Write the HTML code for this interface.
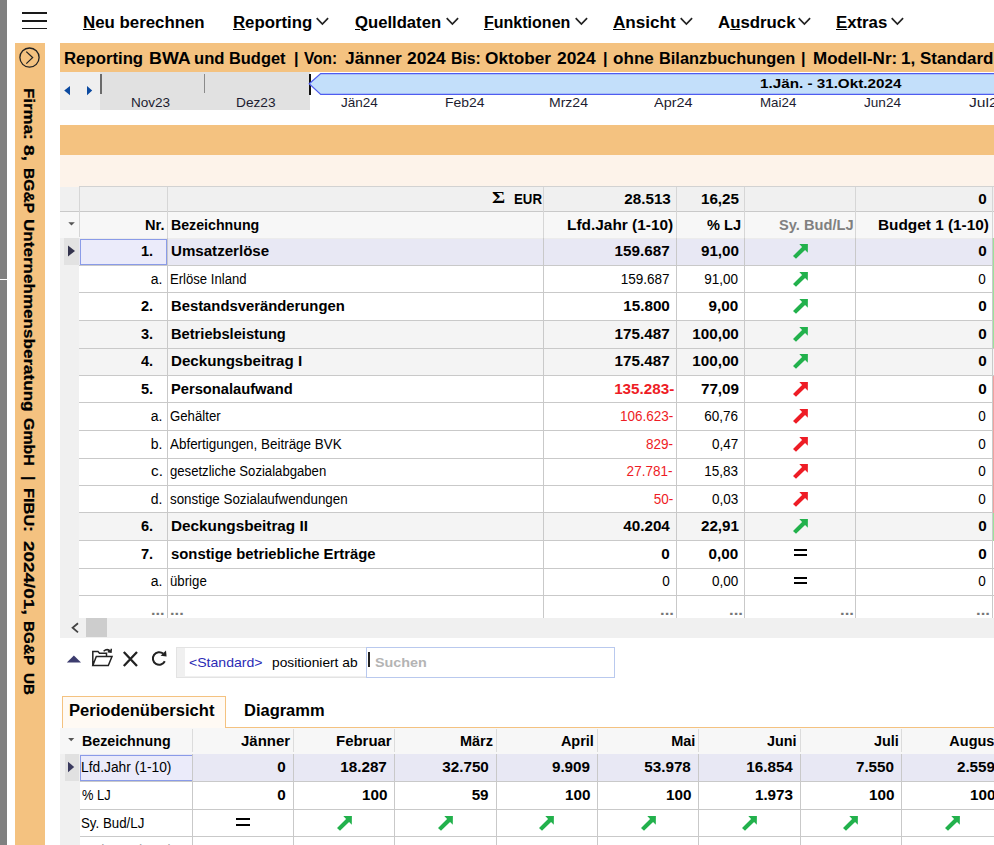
<!DOCTYPE html>
<html><head><meta charset="utf-8"><title>Reporting BWA und Budget</title><style>
html,body{margin:0;padding:0;background:#fff}
body{width:994px;height:845px;position:relative;overflow:hidden;font-family:"Liberation Sans", sans-serif;}
#r{position:absolute;left:0;top:0;width:994px;height:845px;overflow:hidden;background:#fff}
#r div,#r svg,#r span{position:absolute}
#r span{white-space:nowrap;line-height:1;transform-origin:0 0}
#r span.b{font-weight:bold}
#r span.r{transform-origin:100% 0}
u{text-decoration:underline;text-underline-offset:0.8px;text-decoration-thickness:1.1px}
</style></head><body><div id="r">
<div style="left:0px;top:0px;width:7px;height:845px;background:#808080;"></div>
<div style="left:0px;top:279px;width:7px;height:1.2px;background:#fff;"></div>
<div style="left:14.6px;top:43px;width:30.2px;height:802px;background:#f4c280;"></div>
<div style="left:60px;top:43px;width:934px;height:29px;background:#f4c280;"></div>
<div style="left:60px;top:72px;width:40px;height:38px;background:#efefef;"></div>
<div style="left:100px;top:72px;width:209.5px;height:38px;background:#e1e1e1;"></div>
<div style="left:100px;top:74px;width:1.5px;height:19.5px;background:#6a6a6a;"></div>
<div style="left:204.2px;top:74px;width:1px;height:19px;background:#8a8a8a;"></div>
<div style="left:308.5px;top:73.5px;width:2px;height:21px;background:#111;"></div>
<div style="left:60px;top:125px;width:934px;height:30px;background:#f4c280;"></div>
<div style="left:60px;top:155px;width:934px;height:31.5px;background:#fdf3ea;"></div>
<div style="left:60px;top:186.5px;width:934px;height:24.5px;background:#f0f0f0;"></div>
<div style="left:60px;top:211px;width:934px;height:27px;background:#f7f7f7;"></div>
<div style="left:60px;top:238px;width:19px;height:379.5px;background:#f0f0f0;"></div>
<div style="left:79px;top:238.0px;width:915px;height:27.5px;background:#e8e8f4;"></div>
<div style="left:79px;top:320.5px;width:915px;height:27.5px;background:#f4f4f4;"></div>
<div style="left:79px;top:348.0px;width:915px;height:27.5px;background:#f4f4f4;"></div>
<div style="left:79px;top:513.0px;width:915px;height:27.5px;background:#f4f4f4;"></div>
<div style="left:794px;top:549px;width:13px;height:2px;background:#000;"></div>
<div style="left:794px;top:554px;width:13px;height:2px;background:#000;"></div>
<div style="left:794px;top:577px;width:13px;height:2px;background:#000;"></div>
<div style="left:794px;top:582px;width:13px;height:2px;background:#000;"></div>
<div style="left:79px;top:186px;width:915px;height:1px;background:#d2d2d2;"></div>
<div style="left:60px;top:210.5px;width:934px;height:1px;background:#c9c9c9;"></div>
<div style="left:79px;top:237.5px;width:915px;height:1px;background:#ececec;"></div>
<div style="left:79px;top:265px;width:915px;height:1px;background:#c9c9c9;"></div>
<div style="left:79px;top:292px;width:915px;height:1px;background:#c9c9c9;"></div>
<div style="left:79px;top:320px;width:915px;height:1px;background:#c9c9c9;"></div>
<div style="left:79px;top:348px;width:915px;height:1px;background:#c9c9c9;"></div>
<div style="left:79px;top:375px;width:915px;height:1px;background:#c9c9c9;"></div>
<div style="left:79px;top:402px;width:915px;height:1px;background:#c9c9c9;"></div>
<div style="left:79px;top:430px;width:915px;height:1px;background:#c9c9c9;"></div>
<div style="left:79px;top:458px;width:915px;height:1px;background:#c9c9c9;"></div>
<div style="left:79px;top:485px;width:915px;height:1px;background:#c9c9c9;"></div>
<div style="left:79px;top:512px;width:915px;height:1px;background:#c9c9c9;"></div>
<div style="left:79px;top:540px;width:915px;height:1px;background:#c9c9c9;"></div>
<div style="left:79px;top:568px;width:915px;height:1px;background:#c9c9c9;"></div>
<div style="left:79px;top:595px;width:915px;height:1px;background:#c9c9c9;"></div>
<div style="left:78.5px;top:187px;width:1px;height:50px;background:#d6d6d6;"></div>
<div style="left:167px;top:187px;width:1px;height:51px;background:#d6d6d6;"></div>
<div style="left:167px;top:238px;width:1px;height:379.5px;background:#c9c9c9;"></div>
<div style="left:543px;top:187px;width:1px;height:51px;background:#d6d6d6;"></div>
<div style="left:543px;top:238px;width:1px;height:379.5px;background:#c9c9c9;"></div>
<div style="left:676px;top:187px;width:1px;height:51px;background:#d6d6d6;"></div>
<div style="left:676px;top:238px;width:1px;height:379.5px;background:#c9c9c9;"></div>
<div style="left:744px;top:187px;width:1px;height:51px;background:#d6d6d6;"></div>
<div style="left:744px;top:238px;width:1px;height:379.5px;background:#c9c9c9;"></div>
<div style="left:855px;top:187px;width:1px;height:51px;background:#d6d6d6;"></div>
<div style="left:855px;top:238px;width:1px;height:379.5px;background:#c9c9c9;"></div>
<div style="left:992px;top:187px;width:1px;height:51px;background:#d6d6d6;"></div>
<div style="left:992px;top:238px;width:1px;height:379.5px;background:#c9c9c9;"></div>
<div style="left:993px;top:238px;width:1px;height:110px;background:#9be29b;"></div>
<div style="left:993px;top:375.5px;width:1px;height:137.5px;background:#f2a0a0;"></div>
<div style="left:993px;top:513px;width:1px;height:27.5px;background:#9be29b;"></div>
<div style="left:64px;top:238.4px;width:14.5px;height:26.6px;background:#e2e2e2;"></div>
<div style="left:79.6px;top:238.8px;width:87.6px;height:26.6px;background:#ebebfa;border:1.3px solid #8a9be8;box-sizing:border-box"></div>
<div style="left:60px;top:617.5px;width:934px;height:20.5px;background:#f0f0f0;"></div>
<div style="left:86px;top:617.5px;width:21px;height:19.5px;background:#cdcdcd;"></div>
<div style="left:176px;top:646.5px;width:190.5px;height:31px;background:#f0f0f0;border:1px solid #e3e3e3;box-sizing:border-box"></div>
<div style="left:185px;top:648px;width:181px;height:28px;background:#fff;"></div>
<div style="left:366px;top:646.5px;width:249px;height:31px;background:#fff;border:1px solid #b9c9ee;box-sizing:border-box"></div>
<div style="left:368px;top:651.5px;width:1.6px;height:15.5px;background:#222;"></div>
<div style="left:61.5px;top:695.5px;width:164.5px;height:32px;background:#fffaf4;border:1px solid #f4c280;border-bottom:none;box-sizing:border-box"></div>
<div style="left:225.5px;top:726.5px;width:769px;height:1.5px;background:#f4c280;"></div>
<div style="left:60px;top:727.5px;width:934px;height:26.5px;background:#f7f7f7;"></div>
<div style="left:60px;top:754px;width:19.5px;height:91px;background:#f0f0f0;"></div>
<div style="left:79.5px;top:754px;width:915px;height:27.3px;background:#e8e8f4;"></div>
<div style="left:64.5px;top:754.2px;width:14.5px;height:26.8px;background:#e1e1e1;"></div>
<div style="left:80px;top:754.8px;width:112.5px;height:26.2px;background:#ebebfa;border:1.3px solid #8a9be8;box-sizing:border-box"></div>
<div style="left:79.5px;top:781px;width:915px;height:1px;background:#c9c9c9;"></div>
<div style="left:79.5px;top:809px;width:915px;height:1px;background:#c9c9c9;"></div>
<div style="left:79.5px;top:836px;width:915px;height:1px;background:#c9c9c9;"></div>
<div style="left:192px;top:729px;width:1px;height:23px;background:#dcdcdc;"></div>
<div style="left:192px;top:754px;width:1px;height:92px;background:#c9c9c9;"></div>
<div style="left:293px;top:729px;width:1px;height:23px;background:#dcdcdc;"></div>
<div style="left:293px;top:754px;width:1px;height:92px;background:#c9c9c9;"></div>
<div style="left:394px;top:729px;width:1px;height:23px;background:#dcdcdc;"></div>
<div style="left:394px;top:754px;width:1px;height:92px;background:#c9c9c9;"></div>
<div style="left:496px;top:729px;width:1px;height:23px;background:#dcdcdc;"></div>
<div style="left:496px;top:754px;width:1px;height:92px;background:#c9c9c9;"></div>
<div style="left:597px;top:729px;width:1px;height:23px;background:#dcdcdc;"></div>
<div style="left:597px;top:754px;width:1px;height:92px;background:#c9c9c9;"></div>
<div style="left:698px;top:729px;width:1px;height:23px;background:#dcdcdc;"></div>
<div style="left:698px;top:754px;width:1px;height:92px;background:#c9c9c9;"></div>
<div style="left:800px;top:729px;width:1px;height:23px;background:#dcdcdc;"></div>
<div style="left:800px;top:754px;width:1px;height:92px;background:#c9c9c9;"></div>
<div style="left:901px;top:729px;width:1px;height:23px;background:#dcdcdc;"></div>
<div style="left:901px;top:754px;width:1px;height:92px;background:#c9c9c9;"></div>
<div style="left:236.3px;top:818.2px;width:13.3px;height:2.1px;background:#000;"></div>
<div style="left:236.3px;top:823.5px;width:13.3px;height:2.1px;background:#000;"></div>
<div style="left:22px;top:12.4px;width:25px;height:1.5px;background:#1a1a1a;"></div>
<div style="left:22px;top:20.2px;width:25px;height:1.5px;background:#1a1a1a;"></div>
<div style="left:22px;top:27.7px;width:25px;height:1.5px;background:#1a1a1a;"></div>
<svg style="left:300px;top:70px" width="694" height="28" viewBox="300 70 694 28"><path d="M309.2 83.8 L320.7 73.6 L1000 73.6 L1000 94.4 L320.7 94.4 Z" fill="#c3dffa" stroke="#4f5cf0" stroke-width="1.2"/></svg>
<svg style="left:62px;top:84px" width="34" height="14" viewBox="62 84 34 14"><path d="M64.2 90.6 L70 86 L70 95.3 Z M92.2 90.6 L87 86 L87 95.3 Z" fill="#0c4aa0"/></svg>
<svg style="left:17px;top:45px" width="26" height="26" viewBox="17 45 26 26"><circle cx="29.5" cy="57.6" r="9.6" fill="none" stroke="#222" stroke-width="1.3"/><path d="M26.3 51.6 L32.6 57.6 L26.3 63.6" fill="none" stroke="#222" stroke-width="1.3"/></svg>
<svg style="left:66px;top:220px" width="12" height="8" viewBox="66 220 12 8"><path d="M68.3 222.3 L74.8 222.3 L71.5 225.4 Z" fill="#555"/></svg>
<svg style="left:66px;top:243px" width="12" height="16" viewBox="66 243 12 16"><path d="M68 245.5 L75 251 L68 256.4 Z" fill="#33334d"/></svg>
<svg style="left:66px;top:736px" width="12" height="8" viewBox="66 736 12 8"><path d="M68.1 737.9 L74.3 737.9 L71.2 741.2 Z" fill="#555"/></svg>
<svg style="left:66px;top:759px" width="12" height="16" viewBox="66 759 12 16"><path d="M68 761.7 L74.2 767 L68 772.3 Z" fill="#3a3a5e"/></svg>
<svg style="left:68px;top:620px" width="14" height="14" viewBox="68 620 14 14"><path d="M78 623.2 L72.6 627.8 L78 632.4" fill="none" stroke="#444" stroke-width="1.8"/></svg>
<svg style="left:64px;top:645px" width="110" height="26" viewBox="64 645 110 26"><path d="M66.8 662.6 L73.9 655.4 L81 662.6 Z" fill="#3c3c6e"/><path d="M92.8 665.5 L92.8 651.5 L98 651.5 L99.5 653.3 L106.5 653.3 L106.5 656.6 M92.8 665.5 L96.3 656.6 L112 656.6 L108.3 665.5 Z M103.6 651.2 Q107.3 647.9 110.6 651.4 M111.3 648.8 L111 652.2 L107.8 651.8" fill="none" stroke="#222" stroke-width="1.5"/><path d="M123.8 652 L137 666 M137 652 L123.8 666" fill="none" stroke="#222" stroke-width="2.3"/><path d="M164.8 661.3 A6.3 6.3 0 1 1 163.2 653.6" fill="none" stroke="#222" stroke-width="2"/><path d="M160.6 655.8 L166.6 656.6 L166 650.6 Z" fill="#222"/></svg>
<svg style="left:793.2px;top:244.2px" width="15" height="15" viewBox="0 0 15 15"><polygon points="0,11.9 9.05,2.9 6.3,0.1 14.9,0 14.8,8.7 12.05,5.9 3,14.8" fill="#22b14c"/></svg>
<svg style="left:793.2px;top:271.6px" width="15" height="15" viewBox="0 0 15 15"><polygon points="0,11.9 9.05,2.9 6.3,0.1 14.9,0 14.8,8.7 12.05,5.9 3,14.8" fill="#22b14c"/></svg>
<svg style="left:793.2px;top:299.1px" width="15" height="15" viewBox="0 0 15 15"><polygon points="0,11.9 9.05,2.9 6.3,0.1 14.9,0 14.8,8.7 12.05,5.9 3,14.8" fill="#22b14c"/></svg>
<svg style="left:793.2px;top:326.6px" width="15" height="15" viewBox="0 0 15 15"><polygon points="0,11.9 9.05,2.9 6.3,0.1 14.9,0 14.8,8.7 12.05,5.9 3,14.8" fill="#22b14c"/></svg>
<svg style="left:793.2px;top:354.1px" width="15" height="15" viewBox="0 0 15 15"><polygon points="0,11.9 9.05,2.9 6.3,0.1 14.9,0 14.8,8.7 12.05,5.9 3,14.8" fill="#22b14c"/></svg>
<svg style="left:793.2px;top:381.6px" width="15" height="15" viewBox="0 0 15 15"><polygon points="0,11.9 9.05,2.9 6.3,0.1 14.9,0 14.8,8.7 12.05,5.9 3,14.8" fill="#ee1c25"/></svg>
<svg style="left:793.2px;top:409.1px" width="15" height="15" viewBox="0 0 15 15"><polygon points="0,11.9 9.05,2.9 6.3,0.1 14.9,0 14.8,8.7 12.05,5.9 3,14.8" fill="#ee1c25"/></svg>
<svg style="left:793.2px;top:436.6px" width="15" height="15" viewBox="0 0 15 15"><polygon points="0,11.9 9.05,2.9 6.3,0.1 14.9,0 14.8,8.7 12.05,5.9 3,14.8" fill="#ee1c25"/></svg>
<svg style="left:793.2px;top:464.1px" width="15" height="15" viewBox="0 0 15 15"><polygon points="0,11.9 9.05,2.9 6.3,0.1 14.9,0 14.8,8.7 12.05,5.9 3,14.8" fill="#ee1c25"/></svg>
<svg style="left:793.2px;top:491.6px" width="15" height="15" viewBox="0 0 15 15"><polygon points="0,11.9 9.05,2.9 6.3,0.1 14.9,0 14.8,8.7 12.05,5.9 3,14.8" fill="#ee1c25"/></svg>
<svg style="left:793.2px;top:519.1px" width="15" height="15" viewBox="0 0 15 15"><polygon points="0,11.9 9.05,2.9 6.3,0.1 14.9,0 14.8,8.7 12.05,5.9 3,14.8" fill="#22b14c"/></svg>
<svg style="left:336.8px;top:815.6px" width="15" height="15" viewBox="0 0 15 15"><polygon points="0,11.9 9.05,2.9 6.3,0.1 14.9,0 14.8,8.7 12.05,5.9 3,14.8" fill="#22b14c"/></svg>
<svg style="left:438.0px;top:815.6px" width="15" height="15" viewBox="0 0 15 15"><polygon points="0,11.9 9.05,2.9 6.3,0.1 14.9,0 14.8,8.7 12.05,5.9 3,14.8" fill="#22b14c"/></svg>
<svg style="left:539.4px;top:815.6px" width="15" height="15" viewBox="0 0 15 15"><polygon points="0,11.9 9.05,2.9 6.3,0.1 14.9,0 14.8,8.7 12.05,5.9 3,14.8" fill="#22b14c"/></svg>
<svg style="left:640.5px;top:815.6px" width="15" height="15" viewBox="0 0 15 15"><polygon points="0,11.9 9.05,2.9 6.3,0.1 14.9,0 14.8,8.7 12.05,5.9 3,14.8" fill="#22b14c"/></svg>
<svg style="left:741.9px;top:815.6px" width="15" height="15" viewBox="0 0 15 15"><polygon points="0,11.9 9.05,2.9 6.3,0.1 14.9,0 14.8,8.7 12.05,5.9 3,14.8" fill="#22b14c"/></svg>
<svg style="left:843.4px;top:815.6px" width="15" height="15" viewBox="0 0 15 15"><polygon points="0,11.9 9.05,2.9 6.3,0.1 14.9,0 14.8,8.7 12.05,5.9 3,14.8" fill="#22b14c"/></svg>
<svg style="left:944.8px;top:815.6px" width="15" height="15" viewBox="0 0 15 15"><polygon points="0,11.9 9.05,2.9 6.3,0.1 14.9,0 14.8,8.7 12.05,5.9 3,14.8" fill="#22b14c"/></svg>
<svg style="left:316px;top:17px" width="13" height="9" viewBox="0 0 13 9"><path d="M0.7 1.2 L6.4 7 L12.1 1.2" fill="none" stroke="#222" stroke-width="1.7"/></svg>
<svg style="left:445.6px;top:17px" width="13" height="9" viewBox="0 0 13 9"><path d="M0.7 1.2 L6.4 7 L12.1 1.2" fill="none" stroke="#222" stroke-width="1.7"/></svg>
<svg style="left:574.8px;top:17px" width="13" height="9" viewBox="0 0 13 9"><path d="M0.7 1.2 L6.4 7 L12.1 1.2" fill="none" stroke="#222" stroke-width="1.7"/></svg>
<svg style="left:680px;top:17px" width="13" height="9" viewBox="0 0 13 9"><path d="M0.7 1.2 L6.4 7 L12.1 1.2" fill="none" stroke="#222" stroke-width="1.7"/></svg>
<svg style="left:798.3px;top:17px" width="13" height="9" viewBox="0 0 13 9"><path d="M0.7 1.2 L6.4 7 L12.1 1.2" fill="none" stroke="#222" stroke-width="1.7"/></svg>
<svg style="left:891.3px;top:17px" width="13" height="9" viewBox="0 0 13 9"><path d="M0.7 1.2 L6.4 7 L12.1 1.2" fill="none" stroke="#222" stroke-width="1.7"/></svg>
<span id="s0" class="b" style="left:22.3px;top:87.6px;font-size:15.2px;-webkit-text-stroke:0.25px #000;transform-origin:0 0;transform:rotate(90deg) translate(0,-100%) scaleX(1.1130);">Firma:</span>
<span id="s1" class="b" style="left:22.3px;top:145.4px;font-size:15.2px;-webkit-text-stroke:0.25px #000;transform-origin:0 0;transform:rotate(90deg) translate(0,-100%) scaleX(1.2769);">8,</span>
<span id="s2" class="b" style="left:22.3px;top:167.5px;font-size:15.2px;-webkit-text-stroke:0.25px #000;transform-origin:0 0;transform:rotate(90deg) translate(0,-100%) scaleX(1.0295);">BG&amp;P</span>
<span id="s3" class="b" style="left:22.3px;top:219px;font-size:15.2px;-webkit-text-stroke:0.25px #000;transform-origin:0 0;transform:rotate(90deg) translate(0,-100%) scaleX(1.1240);">Unternehmensberatung</span>
<span id="s4" class="b" style="left:22.3px;top:418.3px;font-size:15.2px;-webkit-text-stroke:0.25px #000;transform-origin:0 0;transform:rotate(90deg) translate(0,-100%) scaleX(1.0500);">GmbH</span>
<span id="s5" class="b" style="left:22.3px;top:475.6px;font-size:15.2px;-webkit-text-stroke:0.25px #000;transform-origin:0 0;transform:rotate(90deg) translate(0,-100%) scaleX(1.0000);">|</span>
<span id="s6" class="b" style="left:22.3px;top:488.3px;font-size:15.2px;-webkit-text-stroke:0.25px #000;transform-origin:0 0;transform:rotate(90deg) translate(0,-100%) scaleX(1.0805);">FIBU:</span>
<span id="s7" class="b" style="left:22.3px;top:541px;font-size:15.2px;-webkit-text-stroke:0.25px #000;transform-origin:0 0;transform:rotate(90deg) translate(0,-100%) scaleX(1.2458);">2024/01,</span>
<span id="s8" class="b" style="left:22.3px;top:621px;font-size:15.2px;-webkit-text-stroke:0.25px #000;transform-origin:0 0;transform:rotate(90deg) translate(0,-100%) scaleX(1.0045);">BG&amp;P</span>
<span id="s9" class="b" style="left:22.3px;top:672.9px;font-size:15.2px;-webkit-text-stroke:0.25px #000;transform-origin:0 0;transform:rotate(90deg) translate(0,-100%) scaleX(1.0045);">UB</span>
<span id="t0" class="b" style="top:244.15px;font-size:14px;left:140.7px;transform:scaleX(1.0417);">1.</span>
<span id="t1" class="b" style="top:244.15px;font-size:14px;left:170.5px;transform:scaleX(1.0780);">Umsatzerlöse</span>
<span id="t2" class="b r" style="top:244.15px;font-size:14px;right:324.00px;transform:scaleX(1.0880);">159.687</span>
<span id="t3" class="b r" style="top:244.15px;font-size:14px;right:255.40px;transform:scaleX(1.0880);">91,00</span>
<span id="t4" class="b r" style="top:244.15px;font-size:14px;right:7.20px;transform:scaleX(1.0880);">0</span>
<span id="t5" style="top:271.65px;font-size:14px;left:150.79999999999998px;">a.</span>
<span id="t6" style="top:271.65px;font-size:14px;left:169.79999999999998px;transform:scaleX(0.9366);">Erlöse Inland</span>
<span id="t7" class="r" style="top:271.65px;font-size:14px;right:324.00px;transform:scaleX(0.9660);">159.687</span>
<span id="t8" class="r" style="top:271.65px;font-size:14px;right:255.90px;transform:scaleX(0.9660);">91,00</span>
<span id="t9" class="r" style="top:271.65px;font-size:14px;right:7.90px;transform:scaleX(0.9660);">0</span>
<span id="t10" class="b" style="top:299.15px;font-size:14px;left:140.7px;transform:scaleX(1.0417);">2.</span>
<span id="t11" class="b" style="top:299.15px;font-size:14px;left:170.5px;transform:scaleX(1.0585);">Bestandsveränderungen</span>
<span id="t12" class="b r" style="top:299.15px;font-size:14px;right:324.00px;transform:scaleX(1.0880);">15.800</span>
<span id="t13" class="b r" style="top:299.15px;font-size:14px;right:255.40px;transform:scaleX(1.0880);">9,00</span>
<span id="t14" class="b r" style="top:299.15px;font-size:14px;right:7.20px;transform:scaleX(1.0880);">0</span>
<span id="t15" class="b" style="top:326.65px;font-size:14px;left:140.7px;transform:scaleX(1.0417);">3.</span>
<span id="t16" class="b" style="top:326.65px;font-size:14px;left:170.5px;transform:scaleX(1.0464);">Betriebsleistung</span>
<span id="t17" class="b r" style="top:326.65px;font-size:14px;right:324.00px;transform:scaleX(1.0880);">175.487</span>
<span id="t18" class="b r" style="top:326.65px;font-size:14px;right:255.40px;transform:scaleX(1.0880);">100,00</span>
<span id="t19" class="b r" style="top:326.65px;font-size:14px;right:7.20px;transform:scaleX(1.0880);">0</span>
<span id="t20" class="b" style="top:354.15px;font-size:14px;left:140.7px;transform:scaleX(1.0417);">4.</span>
<span id="t21" class="b" style="top:354.15px;font-size:14px;left:170.5px;transform:scaleX(1.0802);">Deckungsbeitrag I</span>
<span id="t22" class="b r" style="top:354.15px;font-size:14px;right:324.00px;transform:scaleX(1.0880);">175.487</span>
<span id="t23" class="b r" style="top:354.15px;font-size:14px;right:255.40px;transform:scaleX(1.0880);">100,00</span>
<span id="t24" class="b r" style="top:354.15px;font-size:14px;right:7.20px;transform:scaleX(1.0880);">0</span>
<span id="t25" class="b" style="top:381.65px;font-size:14px;left:140.7px;transform:scaleX(1.0417);">5.</span>
<span id="t26" class="b" style="top:381.65px;font-size:14px;left:170.5px;transform:scaleX(1.0491);">Personalaufwand</span>
<span id="t27" class="b r" style="top:381.65px;font-size:14px;color:#ee1c25;right:320.20px;transform:scaleX(1.0880);">135.283-</span>
<span id="t28" class="b r" style="top:381.65px;font-size:14px;right:255.40px;transform:scaleX(1.0880);">77,09</span>
<span id="t29" class="b r" style="top:381.65px;font-size:14px;right:7.20px;transform:scaleX(1.0880);">0</span>
<span id="t30" style="top:409.15px;font-size:14px;left:150.79999999999998px;">a.</span>
<span id="t31" style="top:409.15px;font-size:14px;left:169.79999999999998px;transform:scaleX(0.9426);">Gehälter</span>
<span id="t32" class="r" style="top:409.15px;font-size:14px;color:#ee1c25;right:321.10px;transform:scaleX(0.9660);">106.623-</span>
<span id="t33" class="r" style="top:409.15px;font-size:14px;right:255.90px;transform:scaleX(0.9660);">60,76</span>
<span id="t34" class="r" style="top:409.15px;font-size:14px;right:7.90px;transform:scaleX(0.9660);">0</span>
<span id="t35" style="top:436.65px;font-size:14px;left:150.79999999999998px;">b.</span>
<span id="t36" style="top:436.65px;font-size:14px;left:169.79999999999998px;transform:scaleX(0.9587);">Abfertigungen, Beiträge BVK</span>
<span id="t37" class="r" style="top:436.65px;font-size:14px;color:#ee1c25;right:321.10px;transform:scaleX(0.9660);">829-</span>
<span id="t38" class="r" style="top:436.65px;font-size:14px;right:255.90px;transform:scaleX(0.9660);">0,47</span>
<span id="t39" class="r" style="top:436.65px;font-size:14px;right:7.90px;transform:scaleX(0.9660);">0</span>
<span id="t40" style="top:464.15px;font-size:14px;left:150.79999999999998px;transform:scaleX(1.0909);">c.</span>
<span id="t41" style="top:464.15px;font-size:14px;left:169.79999999999998px;transform:scaleX(0.9377);">gesetzliche Sozialabgaben</span>
<span id="t42" class="r" style="top:464.15px;font-size:14px;color:#ee1c25;right:321.10px;transform:scaleX(0.9660);">27.781-</span>
<span id="t43" class="r" style="top:464.15px;font-size:14px;right:255.90px;transform:scaleX(0.9660);">15,83</span>
<span id="t44" class="r" style="top:464.15px;font-size:14px;right:7.90px;transform:scaleX(0.9660);">0</span>
<span id="t45" style="top:491.65px;font-size:14px;left:150.79999999999998px;">d.</span>
<span id="t46" style="top:491.65px;font-size:14px;left:169.79999999999998px;transform:scaleX(0.9548);">sonstige Sozialaufwendungen</span>
<span id="t47" class="r" style="top:491.65px;font-size:14px;color:#ee1c25;right:321.10px;transform:scaleX(0.9660);">50-</span>
<span id="t48" class="r" style="top:491.65px;font-size:14px;right:255.90px;transform:scaleX(0.9660);">0,03</span>
<span id="t49" class="r" style="top:491.65px;font-size:14px;right:7.90px;transform:scaleX(0.9660);">0</span>
<span id="t50" class="b" style="top:519.15px;font-size:14px;left:140.7px;transform:scaleX(1.0417);">6.</span>
<span id="t51" class="b" style="top:519.15px;font-size:14px;left:170.5px;transform:scaleX(1.0936);">Deckungsbeitrag II</span>
<span id="t52" class="b r" style="top:519.15px;font-size:14px;right:324.00px;transform:scaleX(1.0880);">40.204</span>
<span id="t53" class="b r" style="top:519.15px;font-size:14px;right:255.40px;transform:scaleX(1.0880);">22,91</span>
<span id="t54" class="b r" style="top:519.15px;font-size:14px;right:7.20px;transform:scaleX(1.0880);">0</span>
<span id="t55" class="b" style="top:546.65px;font-size:14px;left:140.7px;transform:scaleX(1.0417);">7.</span>
<span id="t56" class="b" style="top:546.65px;font-size:14px;left:170.5px;transform:scaleX(1.0601);">sonstige betriebliche Erträge</span>
<span id="t57" class="b r" style="top:546.65px;font-size:14px;right:324.00px;transform:scaleX(1.0880);">0</span>
<span id="t58" class="b r" style="top:546.65px;font-size:14px;right:255.40px;transform:scaleX(1.0880);">0,00</span>
<span id="t59" class="b r" style="top:546.65px;font-size:14px;right:7.20px;transform:scaleX(1.0880);">0</span>
<span id="t60" style="top:574.15px;font-size:14px;left:150.79999999999998px;">a.</span>
<span id="t61" style="top:574.15px;font-size:14px;left:169.79999999999998px;transform:scaleX(0.9436);">übrige</span>
<span id="t62" class="r" style="top:574.15px;font-size:14px;right:324.00px;transform:scaleX(0.9660);">0</span>
<span id="t63" class="r" style="top:574.15px;font-size:14px;right:255.90px;transform:scaleX(0.9660);">0,00</span>
<span id="t64" class="r" style="top:574.15px;font-size:14px;right:7.90px;transform:scaleX(0.9660);">0</span>
<span id="t65" class="b" style="top:603.15px;font-size:14px;color:#777;left:150.79999999999998px;transform:scaleX(1.1667);">...</span>
<span id="t66" class="b" style="top:603.15px;font-size:14px;color:#777;left:169.6px;transform:scaleX(1.1750);">...</span>
<span id="t67" class="b" style="top:603.15px;font-size:14px;color:#777;left:659.9000000000001px;transform:scaleX(1.1917);">...</span>
<span id="t68" class="b" style="top:603.15px;font-size:14px;color:#777;left:728.6px;transform:scaleX(1.2000);">...</span>
<span id="t69" class="b" style="top:603.15px;font-size:14px;color:#777;left:839.7px;transform:scaleX(1.2000);">...</span>
<span id="t70" class="b" style="top:603.15px;font-size:14px;color:#777;left:976.0px;transform:scaleX(1.2000);">...</span>
<span id="t71" class="b" style="top:189.83px;font-size:16.5px;font-family:'Liberation Serif',serif;left:492.0px;transform:scaleX(1.2182);">Σ</span>
<span id="t72" class="b" style="top:191.65px;font-size:14px;left:513.9000000000001px;transform:scaleX(0.9467);">EUR</span>
<span id="t73" class="b r" style="top:191.75px;font-size:14px;right:323.00px;transform:scaleX(1.0880);">28.513</span>
<span id="t74" class="b r" style="top:191.75px;font-size:14px;right:254.60px;transform:scaleX(1.0880);">16,25</span>
<span id="t75" class="b r" style="top:191.75px;font-size:14px;right:7.20px;transform:scaleX(1.0880);">0</span>
<span id="t76" class="b" style="top:217.95px;font-size:14px;left:145.0px;transform:scaleX(1.0421);">Nr.</span>
<span id="t77" class="b" style="top:217.95px;font-size:14px;left:170.6px;transform:scaleX(1.0126);">Bezeichnung</span>
<span id="t78" class="b" style="top:217.95px;font-size:14px;left:567.3000000000001px;transform:scaleX(1.1010);">Lfd.Jahr (1-10)</span>
<span id="t79" class="b" style="top:217.95px;font-size:14px;left:706.8000000000001px;transform:scaleX(1.0424);">% LJ</span>
<span id="t80" class="b" style="top:217.95px;font-size:14px;color:#808080;left:779.2px;transform:scaleX(1.0451);">Sy. Bud/LJ</span>
<span id="t81" class="b" style="top:217.95px;font-size:14px;left:877.9000000000001px;transform:scaleX(1.0970);">Budget 1 (1-10)</span>
<span id="t82" style="top:655.70px;font-size:13px;color:#2b2bb5;left:188.79999999999998px;transform:scaleX(1.0824);">&lt;Standard&gt;</span>
<span id="t83" style="top:655.70px;font-size:13px;left:271.8px;transform:scaleX(1.0568);">positioniert ab</span>
<span id="t84" class="b" style="top:655.70px;font-size:13px;color:#b4b4b4;left:375.09999999999997px;transform:scaleX(1.1043);">Suchen</span>
<span id="t85" class="b" style="top:702.99px;font-size:15.6px;left:69.3px;transform:scaleX(1.0620);">Periodenübersicht</span>
<span id="t86" class="b" style="top:702.99px;font-size:15.6px;left:243.7px;transform:scaleX(1.0566);">Diagramm</span>
<span id="t87" class="b" style="top:733.85px;font-size:14px;left:81.9px;transform:scaleX(1.0172);">Bezeichnung</span>
<span id="t88" class="b" style="top:733.85px;font-size:14px;left:241.1px;transform:scaleX(1.0717);">Jänner</span>
<span id="t89" class="b r" style="top:760.45px;font-size:14px;right:708.00px;transform:scaleX(1.0880);">0</span>
<span id="t90" class="b r" style="top:787.95px;font-size:14px;right:708.00px;transform:scaleX(1.0880);">0</span>
<span id="t91" class="r" style="top:842.65px;font-size:14px;color:#9a9a9a;right:708.00px;transform:scaleX(0.9660);">0</span>
<span id="t92" class="b" style="top:733.85px;font-size:14px;left:336.2px;transform:scaleX(1.0673);">Februar</span>
<span id="t93" class="b r" style="top:760.45px;font-size:14px;right:606.70px;transform:scaleX(1.0880);">18.287</span>
<span id="t94" class="b r" style="top:787.95px;font-size:14px;right:606.70px;transform:scaleX(1.0880);">100</span>
<span id="t95" class="r" style="top:842.65px;font-size:14px;color:#9a9a9a;right:606.70px;transform:scaleX(0.9660);">0</span>
<span id="t96" class="b r" style="top:733.85px;font-size:14px;right:501.40px;transform:scaleX(1.0350);">März</span>
<span id="t97" class="b r" style="top:760.45px;font-size:14px;right:505.40px;transform:scaleX(1.0880);">32.750</span>
<span id="t98" class="b r" style="top:787.95px;font-size:14px;right:505.40px;transform:scaleX(1.0880);">59</span>
<span id="t99" class="r" style="top:842.65px;font-size:14px;color:#9a9a9a;right:505.40px;transform:scaleX(0.9660);">0</span>
<span id="t100" class="b r" style="top:733.85px;font-size:14px;right:400.10px;transform:scaleX(1.0350);">April</span>
<span id="t101" class="b r" style="top:760.45px;font-size:14px;right:404.10px;transform:scaleX(1.0880);">9.909</span>
<span id="t102" class="b r" style="top:787.95px;font-size:14px;right:404.10px;transform:scaleX(1.0880);">100</span>
<span id="t103" class="r" style="top:842.65px;font-size:14px;color:#9a9a9a;right:404.10px;transform:scaleX(0.9660);">0</span>
<span id="t104" class="b r" style="top:733.85px;font-size:14px;right:299.00px;transform:scaleX(1.0350);">Mai</span>
<span id="t105" class="b r" style="top:760.45px;font-size:14px;right:303.00px;transform:scaleX(1.0880);">53.978</span>
<span id="t106" class="b r" style="top:787.95px;font-size:14px;right:303.00px;transform:scaleX(1.0880);">100</span>
<span id="t107" class="r" style="top:842.65px;font-size:14px;color:#9a9a9a;right:303.00px;transform:scaleX(0.9660);">0</span>
<span id="t108" class="b" style="top:733.85px;font-size:14px;left:767.2px;transform:scaleX(1.0276);">Juni</span>
<span id="t109" class="b r" style="top:760.45px;font-size:14px;right:201.40px;transform:scaleX(1.0880);">16.854</span>
<span id="t110" class="b r" style="top:787.95px;font-size:14px;right:201.40px;transform:scaleX(1.0880);">1.973</span>
<span id="t111" class="r" style="top:842.65px;font-size:14px;color:#9a9a9a;right:201.40px;transform:scaleX(0.9660);">0</span>
<span id="t112" class="b" style="top:733.85px;font-size:14px;left:873.7px;transform:scaleX(1.0292);">Juli</span>
<span id="t113" class="b r" style="top:760.45px;font-size:14px;right:100.00px;transform:scaleX(1.0880);">7.550</span>
<span id="t114" class="b r" style="top:787.95px;font-size:14px;right:100.00px;transform:scaleX(1.0880);">100</span>
<span id="t115" class="r" style="top:842.65px;font-size:14px;color:#9a9a9a;right:100.00px;transform:scaleX(0.9660);">0</span>
<span id="t116" class="b r" style="top:733.85px;font-size:14px;right:-5.30px;transform:scaleX(1.0350);">August</span>
<span id="t117" class="b r" style="top:760.45px;font-size:14px;right:-1.30px;transform:scaleX(1.0880);">2.559</span>
<span id="t118" class="b r" style="top:787.95px;font-size:14px;right:-1.30px;transform:scaleX(1.0880);">100</span>
<span id="t119" class="r" style="top:842.65px;font-size:14px;color:#9a9a9a;right:-1.30px;transform:scaleX(0.9660);">0</span>
<span id="t120" style="top:760.45px;font-size:14px;left:81.4px;transform:scaleX(0.9848);">Lfd.Jahr (1-10)</span>
<span id="t121" style="top:787.95px;font-size:14px;left:81.9px;transform:scaleX(0.9194);">% LJ</span>
<span id="t122" style="top:816.15px;font-size:14px;left:81.4px;transform:scaleX(0.9493);">Sy. Bud/LJ</span>
<span id="t123" style="top:842.65px;font-size:14px;color:#9a9a9a;left:81.4px;transform:scaleX(0.9381);">Budget 1 (1-10)</span>
<span id="t124" class="b" style="top:14.59px;font-size:15.6px;left:83.3px;transform:scaleX(1.0796);"><u>N</u>eu berechnen</span>
<span id="t125" class="b" style="top:14.59px;font-size:15.6px;left:232.79999999999998px;transform:scaleX(1.0757);"><u>R</u>eporting</span>
<span id="t126" class="b" style="top:14.59px;font-size:15.6px;left:354.9px;transform:scaleX(1.0679);"><u>Q</u>uelldaten</span>
<span id="t127" class="b" style="top:14.59px;font-size:15.6px;left:484.09999999999997px;transform:scaleX(1.0274);"><u>F</u>unktionen</span>
<span id="t128" class="b" style="top:14.59px;font-size:15.6px;left:613.4000000000001px;transform:scaleX(1.0965);"><u>A</u>nsicht</span>
<span id="t129" class="b" style="top:14.59px;font-size:15.6px;left:717.5px;transform:scaleX(1.0778);">A<u>u</u>sdruck</span>
<span id="t130" class="b" style="top:14.59px;font-size:15.6px;left:836.2px;transform:scaleX(1.0750);"><u>E</u>xtras</span>
<span id="t131" class="b" style="top:50.59px;font-size:15.6px;left:64.2px;transform:scaleX(1.0743);">Reporting</span>
<span id="t132" class="b" style="top:50.59px;font-size:15.6px;left:148.79999999999998px;transform:scaleX(1.1472);">BWA</span>
<span id="t133" class="b" style="top:50.59px;font-size:15.6px;left:193.89999999999998px;transform:scaleX(1.0690);">und</span>
<span id="t134" class="b" style="top:50.59px;font-size:15.6px;left:229.29999999999998px;transform:scaleX(1.0519);">Budget</span>
<span id="t135" class="b" style="top:50.59px;font-size:15.6px;left:293.7px;transform:scaleX(1.0350);">|</span>
<span id="t136" class="b" style="top:50.59px;font-size:15.6px;left:304.0px;transform:scaleX(0.9882);">Von:</span>
<span id="t137" class="b" style="top:50.59px;font-size:15.6px;left:344.8px;transform:scaleX(1.1118);">Jänner</span>
<span id="t138" class="b" style="top:50.59px;font-size:15.6px;left:406.9px;transform:scaleX(1.1171);">2024</span>
<span id="t139" class="b" style="top:50.59px;font-size:15.6px;left:451.0px;transform:scaleX(1.0138);">Bis:</span>
<span id="t140" class="b" style="top:50.59px;font-size:15.6px;left:484.9px;transform:scaleX(1.1050);">Oktober</span>
<span id="t141" class="b" style="top:50.59px;font-size:15.6px;left:556.7px;transform:scaleX(1.1143);">2024</span>
<span id="t142" class="b" style="top:50.59px;font-size:15.6px;left:602.7px;transform:scaleX(1.0350);">|</span>
<span id="t143" class="b" style="top:50.59px;font-size:15.6px;left:613.2px;transform:scaleX(1.0973);">ohne</span>
<span id="t144" class="b" style="top:50.59px;font-size:15.6px;left:659.2px;transform:scaleX(1.0485);">Bilanzbuchungen</span>
<span id="t145" class="b" style="top:50.59px;font-size:15.6px;left:800.7px;transform:scaleX(1.0350);">|</span>
<span id="t146" class="b" style="top:50.59px;font-size:15.6px;left:812.8000000000001px;transform:scaleX(1.0922);">Modell-Nr:</span>
<span id="t147" class="b" style="top:50.59px;font-size:15.6px;left:901.3000000000001px;transform:scaleX(1.1000);">1,</span>
<span id="t148" class="b" style="top:50.59px;font-size:15.6px;left:919.7px;transform:scaleX(1.0853);">Standard</span>
<span id="t149" style="top:97.25px;font-size:12.7px;color:#1c1c30;left:130.89999999999998px;transform:scaleX(1.0676);">Nov23</span>
<span id="t150" style="top:97.25px;font-size:12.7px;color:#1c1c30;left:236.0px;transform:scaleX(1.0784);">Dez23</span>
<span id="t151" style="top:97.25px;font-size:12.7px;color:#1c1c30;left:341.09999999999997px;transform:scaleX(1.0657);">Jän24</span>
<span id="t152" style="top:97.25px;font-size:12.7px;color:#1c1c30;left:445.2px;transform:scaleX(1.0972);">Feb24</span>
<span id="t153" style="top:97.25px;font-size:12.7px;color:#1c1c30;left:549.2px;transform:scaleX(1.1057);">Mrz24</span>
<span id="t154" style="top:97.25px;font-size:12.7px;color:#1c1c30;left:653.7px;transform:scaleX(1.1382);">Apr24</span>
<span id="t155" style="top:97.25px;font-size:12.7px;color:#1c1c30;left:759.6px;transform:scaleX(1.0514);">Mai24</span>
<span id="t156" style="top:97.25px;font-size:12.7px;color:#1c1c30;left:863.7px;transform:scaleX(1.0714);">Jun24</span>
<span id="t157" style="top:97.25px;font-size:12.7px;color:#1c1c30;left:969.4000000000001px;transform:scaleX(1.2333);">Jul24</span>
<span id="t158" class="b" style="top:77.47px;font-size:13.5px;left:760.2px;transform:scaleX(1.1280);">1.Jän. - 31.Okt.2024</span>
</div></body></html>
